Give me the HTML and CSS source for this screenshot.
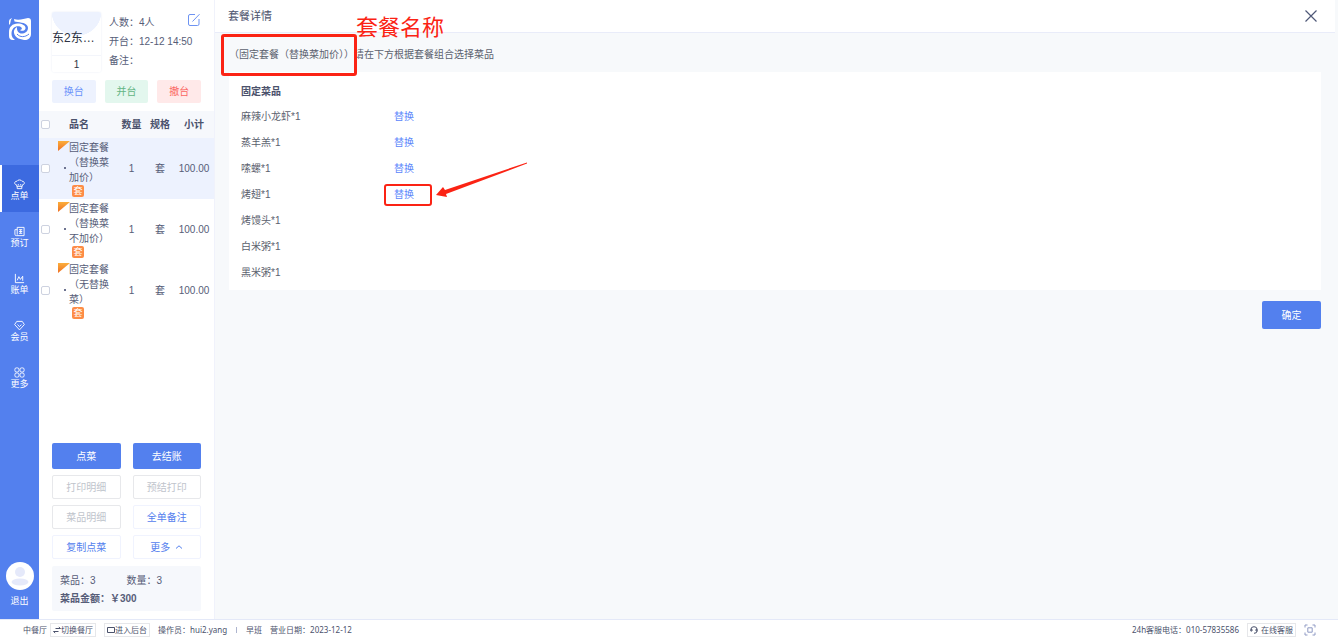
FILE: index.html
```html
<!DOCTYPE html>
<html lang="zh-CN">
<head>
<meta charset="utf-8">
<title>套餐详情</title>
<link rel="stylesheet" href="styles.css">
</head>
<body>
<div class="app">
  <aside class="sidebar">
    <svg class="logo" viewBox="0 0 22 22" fill="#fff">
      <path d="M0 7V3Q0 1 3 0Q1.500 2 1.500 4Q1.500 6 0 7z"/>
      <path d="M5 1C10 3 15 .5 19 0Q22 0 22 3V16C22 19 20 21.500 17 22C12 22 6 20 5 15C4.500 12.500 5.500 10.500 8 9C7.500 13 10 16 13.500 15.500C18 15 20 11 18.500 8C16.500 4 9 4.500 5.500 3.500Z"/>
      <path d="M0 14C0 9 3.500 5.500 8.500 5.500C13 5.500 17 7.500 16.500 10.500C16 13 12.500 13.500 11 12C13.500 11.500 13.500 9.500 11 8.500C7 7.500 2.500 9.500 2.500 16C2.500 18.500 4 20.500 6 22H4Q0 22 0 18z"/>
      <path d="M8 16C11 19.500 16 19.500 20 16" fill="none" stroke="#5380ee" stroke-width="1"/>
    </svg>
    <nav class="nav">
      <a class="nav-item active" href="#"><svg viewBox="0 0 12 12"><path d="M3 6.500C-.5 6 .5 2 3.300 2.500C4 .5 8 .5 8.700 2.500C11.500 2 12.500 6 9 6.500V8H3zM3.500 10.500H8.500M3.500 8V10.500M8.500 8V10.500M4.500 5.500L5 7M7.500 5.500L7 7"/></svg>点单</a>
      <a class="nav-item" href="#"><svg viewBox="0 0 12 12"><path d="M3.500 1.500H11V10.500H2.500Q1 10.500 1 9V4H3.500M3.500 1.500V9.500M5.500 4H9M5.500 6H9M5.500 8H9M7.300 4V8"/></svg>预订</a>
      <a class="nav-item" href="#"><svg viewBox="0 0 12 12"><path d="M1.500 1V10.500H11M3.500 8L5.300 4L7 7L9.500 3.500V8.500"/></svg>账单</a>
      <a class="nav-item" href="#"><svg viewBox="0 0 12 12"><path d="M3 1.500H9L11.300 5L6 10.800L.7 5zM3.800 5L6 7.200L8.200 5"/></svg>会员</a>
      <a class="nav-item" href="#"><svg viewBox="0 0 12 12"><rect x="1" y="1" width="4.400" height="4.400" rx="1.500"/><rect x="6.600" y="1" width="4.400" height="4.400" rx="1.500"/><rect x="1" y="6.600" width="4.400" height="4.400" rx="1.500"/><rect x="6.600" y="6.600" width="4.400" height="4.400" rx="1.500"/></svg>更多</a>
    </nav>
    <button class="logout" type="button">
      <svg viewBox="0 0 28 28"><circle cx="14" cy="14" r="14" fill="#fff"/><circle cx="14" cy="10" r="5" fill="#e5e9fa"/><ellipse cx="14" cy="20" rx="8.500" ry="3.500" fill="#e5e9fa"/></svg>
      退出
    </button>
  </aside>

  <section class="order">
    <div class="table-info">
      <div class="table-card">
        <div class="table-name">东2东…</div>
        <div class="table-count">1</div>
      </div>
      <div class="table-meta">
        <div>人数：4人</div>
        <div>开台：12-12 14:50</div>
        <div>备注：</div>
      </div>
      <button class="edit" type="button" aria-label="编辑"><svg viewBox="0 0 14 14" fill="none" stroke="#6d93f2"><path d="M8 1.500H3Q1.500 1.500 1.500 3V11Q1.500 12.500 3 12.500H10.500Q12 12.500 12 11V6M5.500 8.500L12.500 1.200"/></svg></button>
    </div>
    <div class="table-actions">
      <button class="soft blue" type="button">换台</button>
      <button class="soft green" type="button">并台</button>
      <button class="soft red" type="button">撤台</button>
    </div>
    <table class="dishes">
      <colgroup><col class="c-check"><col class="c-name"><col class="c-qty"><col class="c-unit"><col></colgroup>
      <thead>
        <tr><th><input type="checkbox" aria-label="全选"></th><th class="name">品名</th><th>数量</th><th>规格</th><th>小计</th></tr>
      </thead>
      <tbody>
        <tr class="selected"><td><input type="checkbox" aria-label="选择第1项"></td><td class="name"><i class="ribbon"></i><i class="dot"></i>固定套餐（替换菜加价）<span class="tag">套</span></td><td>1</td><td>套</td><td>100.00</td></tr>
        <tr><td><input type="checkbox" aria-label="选择第2项"></td><td class="name"><i class="ribbon"></i><i class="dot"></i>固定套餐（替换菜不加价）<span class="tag">套</span></td><td>1</td><td>套</td><td>100.00</td></tr>
        <tr><td><input type="checkbox" aria-label="选择第3项"></td><td class="name"><i class="ribbon"></i><i class="dot"></i>固定套餐（无替换菜）<span class="tag">套</span></td><td>1</td><td>套</td><td>100.00</td></tr>
      </tbody>
    </table>
    <div class="order-bottom">
      <div class="buttons">
        <button class="btn primary" type="button">点菜</button>
        <button class="btn primary" type="button">去结账</button>
        <button class="btn" type="button" disabled>打印明细</button>
        <button class="btn" type="button" disabled>预结打印</button>
        <button class="btn" type="button" disabled>菜品明细</button>
        <button class="btn" type="button">全单备注</button>
        <button class="btn" type="button">复制点菜</button>
        <button class="btn" type="button">更多 <svg class="caret" viewBox="0 0 8 6"><path d="M1 4.500L4 1.800L7 4.500" fill="none" stroke="currentColor"/></svg></button>
      </div>
      <div class="summary">
        <div class="summary-row"><span>菜品：3</span><span>数量：3</span></div>
        <div class="summary-total">菜品金额：￥300</div>
      </div>
    </div>
  </section>

  <main class="detail">
    <header class="detail-head">
      <h1>套餐详情</h1>
      <button class="close" type="button" aria-label="关闭"><svg viewBox="0 0 12 12"><path d="M.5 .5L11.500 11.500M11.500 .5L.5 11.500" fill="none" stroke="#4f5878" stroke-width="1.200"/></svg></button>
    </header>
    <div class="detail-body">
      <p class="hint">（固定套餐（替换菜加价））请在下方根据套餐组合选择菜品</p>
      <div class="card">
        <h2>固定菜品</h2>
        <ul>
          <li><span>麻辣小龙虾*1</span><a href="#">替换</a></li>
          <li><span>蒸羊羔*1</span><a href="#">替换</a></li>
          <li><span>嗦螺*1</span><a href="#">替换</a></li>
          <li><span>烤翅*1</span><a href="#">替换</a></li>
          <li><span>烤馒头*1</span></li>
          <li><span>白米粥*1</span></li>
          <li><span>黑米粥*1</span></li>
        </ul>
      </div>
      <button class="confirm" type="button">确定</button>
    </div>
    <div class="mark mark-title"></div>
    <div class="mark-label">套餐名称</div>
    <div class="mark mark-link"></div>
    <svg class="mark-arrow" viewBox="0 0 92 36"><path d="M0 33L7 25L9 28L91 .5V1.500L10 32L11 35z" fill="#fb2314"/></svg>
  </main>

  <footer class="status">
    <span>中餐厅</span>
    <button class="chip switch" type="button"><svg viewBox="0 0 8 8"><path d="M2.500 2.500H7.500L5.800 1M5.500 5.500H.5L2.200 7"/></svg>切换餐厅</button>
    <button class="chip backend" type="button"><svg viewBox="0 0 8 8"><path d="M.5 1.500H7.500V6.500H.5z"/></svg>进入后台</button>
    <span>操作员：hui2.yang</span>
    <i class="sep"></i>
    <span>早班</span>
    <span class="date">营业日期：2023-12-12</span>
    <span class="phone">24h客服电话：010-57835586</span>
    <button class="chip service" type="button"><svg viewBox="0 0 8 8"><path d="M.8 5V3.500Q1 .7 4 .7T7.200 3.500V5Q7 7.300 4 7.300M.8 3.300H2V5H.8M7.200 3.300H6V5H7.200"/></svg>在线客服</button>
    <button class="full" type="button" aria-label="全屏"><svg viewBox="0 0 12 12"><path d="M1 3.500V1H3.500M8.500 1H11V3.500M11 8.500V11H8.500M3.500 11H1V8.500M3.800 3.800H8.200V8.200H3.800z"/></svg></button>
  </footer>
</div>
</body>
</html>
```
FILE: styles.css
```css
* { box-sizing: border-box; }
body {
  margin: 0;
  font: 10px/15px "Liberation Sans", "Noto Sans CJK SC", sans-serif;
  color: #565d78;
  background: #fff;
}
button {
  margin: 0;
  padding: 0;
  border: 0;
  background: none;
  font: inherit;
  color: inherit;
}
a { text-decoration: none; }
svg { display: block; }
h1, h2, p, ul { margin: 0; padding: 0; }

.app {
  display: grid;
  grid-template-columns: 39px 176px 1fr;
  grid-template-rows: 1fr auto;
  min-height: 100vh;
}

.sidebar {
  display: flex;
  flex-direction: column;
  align-items: stretch;
  background: #5380ee;
  color: #fff;
  font-size: 9px;
  line-height: 11px;
}
.logo { width: 22px; height: 22px; margin: 18px 0 0 9px; }
.nav { margin-top: 125px; }
.nav-item {
  display: flex;
  flex-direction: column;
  align-items: center;
  justify-content: center;
  gap: 1px;
  height: 47px;
  padding-top: 4px;
  color: #fff;
}
.nav-item.active { background: #3c6ae0; box-shadow: inset 2px 0 #fff; }
.nav-item svg { width: 11px; height: 11px; fill: none; stroke: #fff; stroke-width: 1; }
.logout {
  display: flex;
  flex-direction: column;
  align-items: center;
  gap: 6px;
  margin: auto 0 12px;
}
.logout svg { width: 28px; height: 28px; }

.order {
  display: flex;
  flex-direction: column;
  background: #fff;
  border-right: 1px solid #f0f2fb;
}
.table-info { display: flex; padding: 12px 13px 0; }
.table-card {
  width: 49px;
  height: 60px;
  border-radius: 2px;
  box-shadow: 0 0 2px #e4e8f4;
  background: radial-gradient(ellipse 25px 24px at 50% 0, #edf2fe 98%, #fff 100%);
  color: #2e3344;
}
.table-name { height: 44px; padding-top: 17px; border-bottom: 1px solid #f3f5fb; font-size: 12px; line-height: 18px; white-space: nowrap; }
.table-count { text-align: center; line-height: 17px; }
.table-meta { flex: 1; margin-left: 8px; padding-top: 1px; line-height: 19px; white-space: nowrap; }
.edit { align-self: flex-start; margin-left: -14px; padding-top: 1px; }
.edit svg { width: 14px; height: 14px; }
.table-actions { display: grid; grid-template-columns: repeat(3, 1fr); gap: 9px; padding: 8px 13px; }
.soft { height: 23px; border-radius: 2px; }
.blue { background: #edf2fe; color: #6b93fa; }
.green { background: #e3f7ee; color: #62b583; }
.red { background: #ffe9e9; color: #fb6662; }

.dishes { width: 100%; table-layout: fixed; border-collapse: collapse; text-align: center; }
.c-check { width: 13px; }
.c-name { width: 65px; }
.c-qty { width: 29px; }
.c-unit { width: 28px; }
.dishes th, .dishes td { padding: 0; }
.dishes th { height: 27px; background: #f6f8fc; color: #4b526c; font-weight: bold; }
.dishes td { height: 61px; }
.dishes .name { position: relative; padding-left: 17px; text-align: left; }
.selected { background: #edf2fe; }
.dishes input {
  appearance: none;
  display: block;
  width: 9px;
  height: 9px;
  margin: 0 0 0 2px;
  border: 1px solid #cdd2e0;
  border-radius: 2px;
  background: #fff;
}
.ribbon {
  position: absolute;
  left: 6px;
  top: 3px;
  width: 12px;
  height: 10px;
  background: linear-gradient(#fbae3c, #ef6f22);
  clip-path: polygon(0 0, 100% 0, 0 100%);
}
.dot { position: absolute; left: 12px; top: 29px; width: 2px; height: 2px; background: #6d7390; }
.tag {
  display: block;
  width: 12px;
  height: 12px;
  margin-left: 3px;
  border-radius: 2px;
  background: #fd8c46;
  color: #fff;
  font-size: 9px;
  line-height: 12px;
  text-align: center;
}

.order-bottom { margin-top: auto; padding: 0 13px 8px; }
.buttons { display: grid; grid-template-columns: 1fr 1fr; gap: 6px 12px; }
.btn {
  display: flex;
  align-items: center;
  justify-content: center;
  gap: 5px;
  height: 24px;
  border: 1px solid #f0f3fe;
  border-radius: 2px;
  color: #5380ee;
}
.btn:disabled { border-color: #e7e8eb; color: #c0c4cc; }
.btn.primary { height: 26px; border: 0; background: #5380ee; color: #fff; }
.caret { width: 8px; height: 6px; }
.summary { margin-top: 7px; padding: 6px 8px 3px; border-radius: 2px; background: #f6f8fc; line-height: 18px; }
.summary-row { display: grid; grid-template-columns: 1fr 1fr; }
.summary-total { font-weight: bold; }

.detail { position: relative; display: flex; flex-direction: column; background: #f7f9fb; }
.detail-head {
  display: flex;
  align-items: center;
  justify-content: space-between;
  height: 33px;
  margin-right: 3px;
  padding: 0 18px 0 13px;
  border-bottom: 1px solid #e9ecf9;
  background: #fff;
}
.detail-head h1 { font-size: 11px; font-weight: normal; color: #4b526c; }
.close svg { width: 12px; height: 12px; }
.detail-body { display: flex; flex-direction: column; padding: 14px 17px 0 14px; color: #5b616e; }
.hint { padding-bottom: 10px; }
.card { padding: 8px 12px 4px; background: #fff; }
.card h2 { font-size: 10px; line-height: 24px; color: #4b526c; }
.card ul { list-style: none; }
.card li { display: grid; grid-template-columns: 153px 1fr; line-height: 26px; }
.card a { justify-self: start; color: #5b86fb; }
.confirm { align-self: flex-end; width: 59px; height: 28px; margin-top: 11px; border-radius: 2px; background: #5380ee; color: #fff; }

.mark { position: absolute; border: 2px solid #fb2314; border-radius: 3px; }
.mark-title { left: 6px; top: 34px; width: 136px; height: 42px; border-width: 3px; }
.mark-link { left: 169px; top: 184px; width: 48px; height: 22px; }
.mark-label { position: absolute; left: 141px; top: 12px; font-size: 22px; line-height: 32px; color: #fb2314; }
.mark-arrow { position: absolute; left: 221px; top: 162px; width: 92px; height: 36px; }

.status {
  grid-column: 1 / -1;
  display: flex;
  align-items: center;
  height: 21px;
  padding: 0 22px 0 23px;
  border-top: 1px solid #e4e9f8;
  background: #fff;
  color: #4b526c;
  font-family: "Noto Sans", "Noto Sans CJK SC", sans-serif;
  font-size: 8px;
  line-height: 12px;
}
.status svg { width: 8px; height: 8px; fill: none; stroke: currentColor; }
.chip { display: flex; align-items: center; height: 14px; padding: 0 2px; border: 1px solid #e6e7ea; }
.switch { margin-left: 3px; }
.backend { margin: 0 8px; }
.sep { width: 1px; height: 6px; margin: 0 9px; background: #aeb5cf; }
.date { margin-left: 8px; }
.phone { margin-left: auto; }
.service { gap: 3px; margin: 0 8px; }
.full { color: #8f9ac4; }
.status .full svg { width: 12px; height: 12px; }
```
